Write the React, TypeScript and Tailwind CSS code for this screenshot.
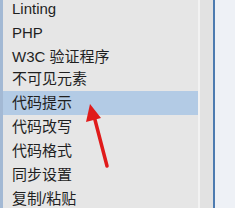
const items = [
  { label: "Linting", latin: true },
  { label: "PHP", latin: true },
  { label: "W3C 验证程序", latin: true },
  { label: "不可见元素", latin: false },
  { label: "代码提示", latin: false },
  { label: "代码改写", latin: false },
  { label: "代码格式", latin: false },
  { label: "同步设置", latin: false },
  { label: "复制/粘贴", latin: false },
];

export default function App() {
  return (
    <div className="relative flex h-[208px] w-[235px] overflow-hidden bg-[#e6e6e6]">
      <div className="w-[198px] shrink-0 border-l-[3px] border-[#a3b9d4]">
        <ul
          className="-mt-[5px] flex flex-col text-[15px] text-[#1f1f1f]"
          style={{ fontFamily: '"Liberation Sans", "Noto Sans CJK SC", sans-serif' }}
        >
          {items.map((item) => (
            <li
              key={item.label}
              className={
                item.label === "代码提示"
                  ? "flex h-[24px] items-center bg-[#b3cbe5] pl-[9px]"
                  : item.latin
                    ? "flex h-[24px] items-center pl-[9px] pt-[4px]"
                    : "flex h-[24px] items-center pl-[9px]"
              }
            >
              {item.label}
            </li>
          ))}
        </ul>
      </div>
      <div className="w-[2px] shrink-0 bg-[#f2f2f2]" />
      <div className="w-[13px] shrink-0 bg-[#e2e2e2]" />
      <div className="w-[2px] shrink-0 bg-[#4d7bb0]" />
      <div className="flex-1 bg-[#eef1f6]" />
      <svg className="absolute left-0 top-0" width="235" height="208" viewBox="0 0 235 208">
        <line x1="107" y1="166" x2="94" y2="116" stroke="#e01b1b" strokeWidth="3.5" strokeLinecap="round" />
        <polygon points="90,104 86,122 101,118" fill="#e01b1b" />
      </svg>
    </div>
  );
}
